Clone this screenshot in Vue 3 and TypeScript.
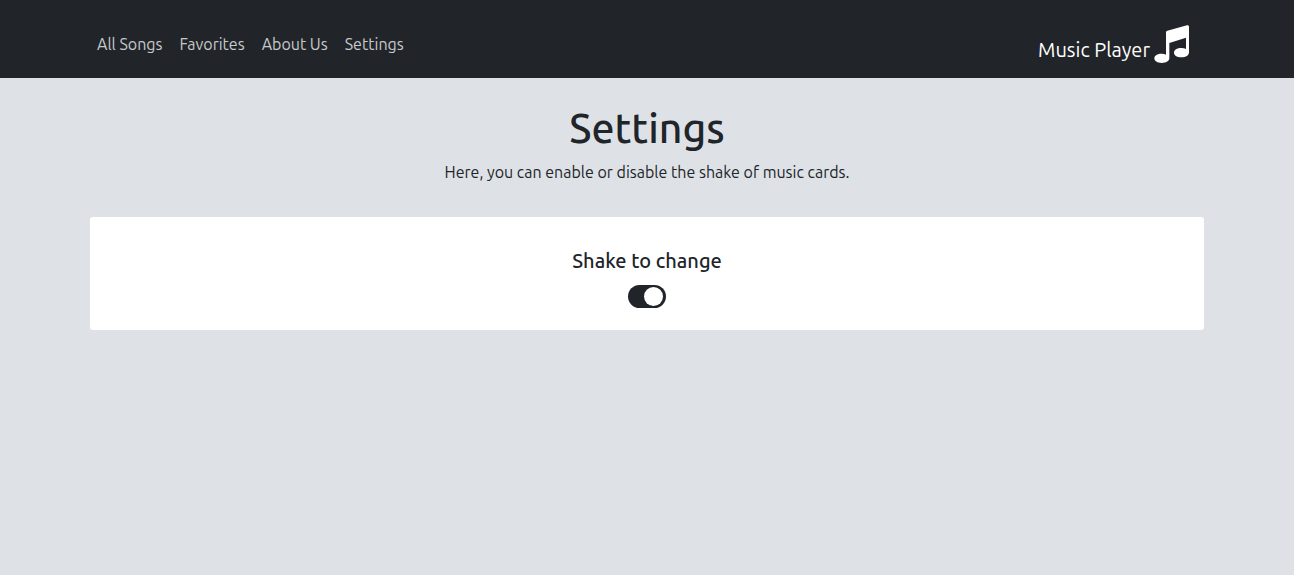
<script setup lang="ts">
import { ref } from 'vue'

interface NavLink {
  label: string
  href: string
}

const links: NavLink[] = [
  { label: 'All Songs', href: '#songs' },
  { label: 'Favorites', href: '#favorites' },
  { label: 'About Us', href: '#about' },
  { label: 'Settings', href: '#settings' },
]

const shake = ref<boolean>(true)
</script>

<template>
  <div class="page">
    <header class="navbar">
      <div class="container bar">
        <nav class="links">
          <a v-for="link in links" :key="link.href" :href="link.href" class="link">{{ link.label }}</a>
        </nav>
        <a href="#home" class="brand">
          <span>Music Player</span>
          <svg class="note" viewBox="0 0 105 114" aria-hidden="true">
            <path
              fill="currentColor"
              d="M36 22Q36 18 40 17L99 1Q105 -1 105 5V82C105 91 96 97 82 97C69 97 60 91 60 83C60 75 69 69 82 69Q91 69 96 72V38L46 54V100C46 108 36 114 23 114C10 114 1 108 1 100C1 92 10 86 23 86Q31 86 36 89Z"
            />
          </svg>
        </a>
      </div>
    </header>

    <main class="container">
      <h1 class="title">Settings</h1>
      <p class="lead">Here, you can enable or disable the shake of music cards.</p>
      <section class="card">
        <label for="shake" class="label">Shake to change</label>
        <input id="shake" v-model="shake" type="checkbox" role="switch" class="switch" />
      </section>
    </main>
  </div>
</template>

<style>
body {
  margin: 0;
  background: #dee2e6;
}
</style>

<style scoped>
.page {
  min-height: 100vh;
  background: #dee2e6;
  color: #212529;
  font-family: Ubuntu, "Noto Sans", "Open Sans", sans-serif;
  font-size: 16px;
  line-height: 24px;
}

.container {
  box-sizing: border-box;
  width: 100%;
  max-width: 1140px;
  margin: 0 auto;
  padding: 0 13px;
}

.navbar {
  background: #212529;
}

.bar {
  display: flex;
  align-items: center;
  justify-content: space-between;
  min-height: 78px;
  padding: 10px 28px 0 20px;
}

.links {
  display: flex;
  gap: 17px;
}

.link {
  color: #c8c9ca;
  text-decoration: none;
}

.brand {
  display: flex;
  align-items: center;
  gap: 4px;
  color: #fff;
  font-size: 20px;
  line-height: 30px;
  text-decoration: none;
}

.brand span {
  padding-top: 12px;
}

.note {
  width: 35px;
  height: 38px;
}

.title {
  margin: 0;
  padding-top: 26px;
  font-size: 41px;
  font-weight: 500;
  line-height: 48px;
  text-align: center;
}

.lead {
  margin: 8px 0 33px;
  text-align: center;
}

.card {
  display: flex;
  flex-direction: column;
  align-items: center;
  gap: 12px;
  padding: 32px 16px 22px;
  border-radius: 3px;
  background: #fff;
}

.label {
  font-size: 20px;
  font-weight: 500;
  line-height: 24px;
}

.switch {
  display: flex;
  align-items: center;
  justify-content: flex-start;
  box-sizing: border-box;
  width: 38px;
  height: 23px;
  margin: 0;
  padding: 2px 3px;
  border-radius: 12px;
  background: #212529;
  appearance: none;
  cursor: pointer;
}

.switch::before {
  content: "";
  width: 19px;
  height: 19px;
  border-radius: 50%;
  background: #fff;
}

.switch:checked {
  justify-content: flex-end;
}
</style>
